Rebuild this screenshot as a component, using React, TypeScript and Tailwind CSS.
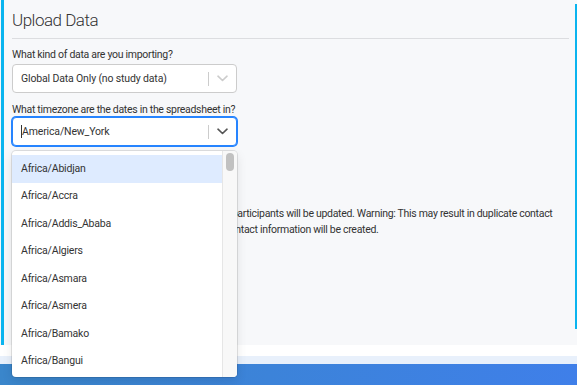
import React from "react";

const zones = [
  "Africa/Abidjan",
  "Africa/Accra",
  "Africa/Addis_Ababa",
  "Africa/Algiers",
  "Africa/Asmara",
  "Africa/Asmera",
  "Africa/Bamako",
  "Africa/Bangui",
];

function Chevron({ color }: { color: string }) {
  return (
    <svg width="11" height="7" viewBox="0 0 11 7" fill="none">
      <path d="M1 1.2L5.5 5.5L10 1.2" stroke={color} strokeWidth="1.6" strokeLinecap="round" strokeLinejoin="round" />
    </svg>
  );
}

export default function App() {
  return (
    <div className="w-[577px] h-[385px] overflow-hidden bg-white font-[Roboto,sans-serif] text-[#333333]">
      <div className="h-[345px] bg-[#f7f8fa] flex">
        <div className="w-[1px] bg-[#f7f8fa]" />
        <div className="w-[3px] bg-[#0ab4ef]" />
        <div className="flex-1 pl-[8px] pr-[6px]">
          <div className="pt-[8px] pb-[6px] border-b border-[#dcdde0]">
            <h1 className="text-[17px] leading-[24px] font-light tracking-[-0.5px] text-[#333333]">
              Upload Data
            </h1>
          </div>
          <div className="mt-[9px] text-[10.5px] tracking-[-0.3px] leading-[14px]">What kind of data are you importing?</div>
          <div className="mt-[2px] w-[225px] h-[29px] bg-white border border-[#cccccc] rounded-[4px] flex items-center">
            <div className="flex-1 pl-[8px] text-[10.5px] tracking-[-0.15px]">Global Data Only (no study data)</div>
            <div className="w-px h-[14px] bg-[#cccccc]" />
            <div className="w-[27px] flex justify-center">
              <Chevron color="#cccccc" />
            </div>
          </div>
          <div className="mt-[10px] text-[10.5px] tracking-[-0.3px] leading-[14px]">What timezone are the dates in the spreadsheet in?</div>
          <div className="relative z-10">
            <div className="w-[225px] h-[29px] bg-white border border-[#2684ff] ring-1 ring-[#2684ff] rounded-[4px] flex items-center">
              <div className="flex-1 pl-[8px] text-[10.5px] tracking-[-0.15px] flex items-center">
                <span className="w-px h-[13px] bg-[#333333]" />
                <span>America/New_York</span>
              </div>
              <div className="w-px h-[14px] bg-[#cccccc]" />
              <div className="w-[27px] flex justify-center">
                <Chevron color="#555555" />
              </div>
            </div>
            <div className="absolute left-0 top-[34px] w-[225px] h-[226px] bg-white rounded-[4px] shadow-[0_0_0_1px_rgba(0,0,0,0.1),0_4px_11px_rgba(0,0,0,0.1)] flex overflow-hidden">
              <div className="flex-1 pt-[4px]">
                {zones.map((z, i) => (
                  <div
                    key={z}
                    className={`h-[27.5px] flex items-center pl-[9px] text-[10.5px] tracking-[-0.2px] ${i === 0 ? "bg-[#deebff]" : ""}`}
                  >
                    {z}
                  </div>
                ))}
              </div>
              <div className="w-[15px] bg-[#f8f8f8] border-l border-[#e6e6e6] pt-[2px] flex justify-center">
                <div className="w-[8px] h-[18px] rounded-full bg-[#c1c1c1]" />
              </div>
            </div>
          </div>
          <p className="mt-[60px] text-[10.5px] tracking-[-0.3px] leading-[16px] text-[#333333]">
            {"If checked, all the existing contact information for\u00a0\u00a0participants will be updated. Warning: This may result in duplicate contact"}
            <br />
            {"information. If it is left unchecked, then only new contact information will be created."}
          </p>
        </div>
        <div className="w-[2px] mt-[4px] h-[325px] bg-[#0ab4ef]" />
      </div>
      <div className="h-[11px] bg-white" />
      <div className="h-[8px] bg-[#e8f0fb]" />
      <div className="h-[21px] bg-gradient-to-r from-[#3a86cb] to-[#3f7fe9]" />
    </div>
  );
}
